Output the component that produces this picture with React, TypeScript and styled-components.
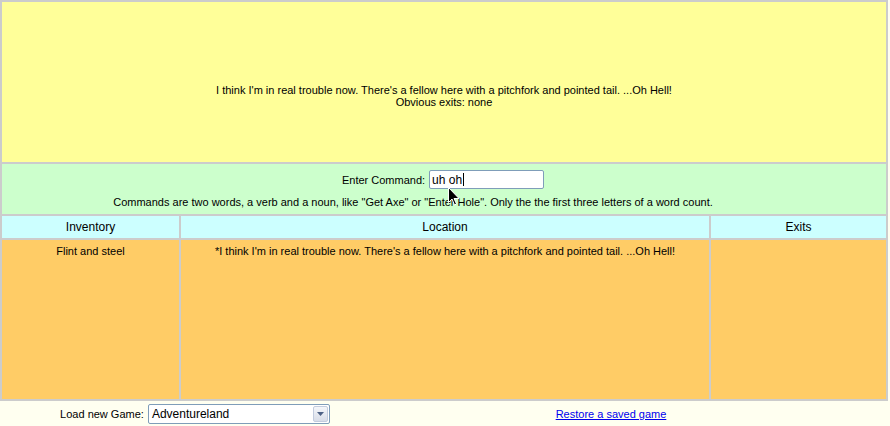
import styled, { createGlobalStyle } from "styled-components";

const GlobalStyle = createGlobalStyle`
  html, body {
    margin: 0;
    padding: 0;
    background: #fffff0;
  }
  body {
    font-family: "Liberation Sans", Arial, sans-serif;
    font-size: 11px;
    color: #000;
  }
`;

const Board = styled.div`
  width: 884px;
  padding: 2px;
  background: #cccccc;
  display: grid;
  grid-template-columns: 177px 528px 1fr;
  grid-template-rows: 160px 50px 22px 159px;
  gap: 2px;
`;

const Cell = styled.div<{ $bg: string; $span?: number }>`
  background: ${(p) => p.$bg};
  grid-column: span ${(p) => p.$span ?? 1};
  text-align: center;
  line-height: 12px;
`;

const Description = styled(Cell)`
  display: flex;
  flex-direction: column;
  justify-content: center;
  padding-top: 28px;
  box-sizing: border-box;
`;

const CommandCell = styled(Cell)`
  display: flex;
  flex-direction: column;
  align-items: center;
  padding-top: 6px;
  gap: 7px;
  position: relative;
`;

const CommandRow = styled.label`
  display: flex;
  align-items: center;
  gap: 4px;
  margin-left: -2px;
`;

const CommandInput = styled.div`
  width: 111px;
  height: 17px;
  border: 1px solid #7f9db9;
  border-radius: 2px;
  background: #fff;
  display: flex;
  align-items: center;
  padding-left: 2px;
  font-size: 12px;
`;

const Caret = styled.span`
  display: inline-block;
  width: 1px;
  height: 13px;
  background: #000;
  margin-left: 1px;
`;

const Hint = styled.div`
  padding-right: 62px;
`;

const Header = styled(Cell)`
  display: flex;
  align-items: center;
  justify-content: center;
  font-size: 12px;
`;

const Body = styled(Cell)`
  padding-top: 5px;
`;

const Pointer = styled.svg`
  position: absolute;
  left: 446px;
  top: 23px;
`;

const Footer = styled.div`
  display: flex;
  height: 26px;
  align-items: center;
`;

const FooterCell = styled.div<{ $w: number }>`
  width: ${(p) => p.$w}px;
  display: flex;
  justify-content: center;
  align-items: center;
  gap: 4px;
`;

const SelectBox = styled.div`
  width: 182px;
  height: 20px;
  border: 1px solid #7f9db9;
  border-radius: 2px;
  background: #fff;
  display: flex;
  align-items: center;
  justify-content: space-between;
  padding-left: 3px;
  font-size: 12px;
  box-sizing: border-box;
`;

const DropButton = styled.div`
  width: 15px;
  height: 16px;
  margin-right: 1px;
  background: linear-gradient(#f4f6fa, #d8dde8);
  border: 1px solid #c3ccde;
  border-radius: 2px;
  display: flex;
  align-items: center;
  justify-content: center;
  box-sizing: border-box;
`;

const Link = styled.a`
  color: #0000ee;
  text-decoration: underline;
  cursor: pointer;
`;

const App = () => {
  const message =
    "I think I'm in real trouble now. There's a fellow here with a pitchfork and pointed tail. ...Oh Hell!";

  return (
    <>
      <GlobalStyle />
      <Board>
        <Description $bg="#ffff99" $span={3}>
          <div>{message}</div>
          <div>Obvious exits: none</div>
        </Description>

        <CommandCell $bg="#ccffcc" $span={3}>
          <CommandRow>
            Enter Command:
            <CommandInput>
              uh oh<Caret />
            </CommandInput>
          </CommandRow>
          <Hint>
            Commands are two words, a verb and a noun, like "Get Axe" or "Enter Hole". Only the the
            first three letters of a word count.
          </Hint>
          <Pointer width="12" height="19" viewBox="0 0 12 19">
            <path d="M0.5 0.5 L0.5 15.5 L4 12 L6.5 18 L8.5 17 L6 11.5 L11 11.5 Z" fill="#000" stroke="#fff" strokeWidth="1" />
          </Pointer>
        </CommandCell>

        <Header $bg="#ccffff">Inventory</Header>
        <Header $bg="#ccffff">Location</Header>
        <Header $bg="#ccffff">Exits</Header>

        <Body $bg="#ffcc66">Flint and steel</Body>
        <Body $bg="#ffcc66">*{message}</Body>
        <Body $bg="#ffcc66" />
      </Board>

      <Footer>
        <FooterCell $w={390}>
          Load new Game:
          <SelectBox>
            Adventureland
            <DropButton>
              <svg width="7" height="4" viewBox="0 0 7 4">
                <path d="M0 0 H7 L3.5 4 Z" fill="#4d6185" />
              </svg>
            </DropButton>
          </SelectBox>
        </FooterCell>
        <FooterCell $w={442}>
          <Link>Restore a saved game</Link>
        </FooterCell>
      </Footer>
    </>
  );
};

export default App;
